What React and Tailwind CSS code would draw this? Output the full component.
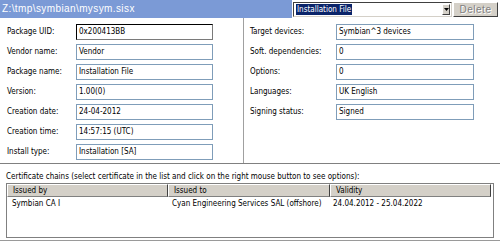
export default function App() {
  const leftRows = [
    ["Package UID:", "0x200413BB", true],
    ["Vendor name:", "Vendor"],
    ["Package name:", "Installation File"],
    ["Version:", "1.00(0)"],
    ["Creation date:", "24-04-2012"],
    ["Creation time:", "14:57:15 (UTC)"],
    ["Install type:", "Installation [SA]"],
  ];
  const rightRows = [
    ["Target devices:", "Symbian^3 devices"],
    ["Soft. dependencies:", "0"],
    ["Options:", "0"],
    ["Languages:", "UK English"],
    ["Signing status:", "Signed"],
  ];
  return (
    <div className="w-[500px] h-[248px] bg-white overflow-hidden text-[8px] leading-none text-black font-['DejaVu_Sans_Condensed','DejaVu_Sans',sans-serif]">
      {/* top bar */}
      <div className="flex h-[18px]">
        <div className="w-[292px] bg-[#7b9ad6] text-white text-[10px] tracking-[0.4px] pl-[2px] flex items-center font-['Liberation_Sans',sans-serif]">
          Z:\tmp\symbian\mysym.sisx
        </div>
        <div className="pt-[2px] pl-[1px]">
          <div className="w-[159px] h-[15px] border-t border-l border-[#404040] border-r border-b border-r-[#d4d0c8] border-b-[#d4d0c8] bg-white flex items-center pl-[2px] pr-[1px]">
            <span className="bg-[#0a246a] text-white px-[1px] h-[11px] flex items-center text-[8px]">Installation File</span>
            <div className="flex-1" />
            <div className="w-[8px] h-[11px] bg-[#d4d0c8] border-t border-l border-white border-r border-b border-r-[#404040] border-b-[#404040] flex items-center justify-center">
              <svg width="5" height="3" viewBox="0 0 5 3"><path d="M0 0H5L2.5 3Z" fill="#000" /></svg>
            </div>
          </div>
        </div>
        <div className="pt-[2px] pl-[1px]">
          <div className="w-[45px] h-[15px] bg-[#d4d0c8] border-t border-l border-white border-r border-b border-r-[#404040] border-b-[#404040] flex items-center justify-center text-[10px] tracking-[0.5px] text-[#808080] font-['Liberation_Sans',sans-serif] [text-shadow:1px_1px_0_#fff]">
            Delete
          </div>
        </div>
      </div>

      {/* fields */}
      <div className="flex h-[146px] border-b border-[#808080]">
        <div className="w-[243px] pl-[7px] pt-[6px] flex flex-col gap-[4px]">
          {leftRows.map(([l, v, focus]) => (
            <div key={l} className="flex items-center h-[16px]">
              <div className="w-[69px]">{l}</div>
              <div
                className={
                  "w-[137px] h-[16px] flex items-center pl-[2px] " +
                  (focus
                    ? "border-t border-l border-black border-r border-b border-r-[#7a7a7a] border-b-[#7a7a7a]"
                    : "border border-[#7f9db9]")
                }
              >
                {v}
              </div>
            </div>
          ))}
        </div>
        <div className="border-l border-[#a0a0a0]" />
        <div className="flex-1 pl-[6px] pt-[6px] flex flex-col gap-[4px]">
          {rightRows.map(([l, v]) => (
            <div key={l} className="flex items-center h-[16px]">
              <div className="w-[86px]">{l}</div>
              <div className="w-[138px] h-[16px] flex items-center pl-[2px] border border-[#7f9db9]">{v}</div>
            </div>
          ))}
        </div>
      </div>

      {/* certificates */}
      <div className="h-[77px] border-b border-[#9a9a9a] pl-[6px]">
        <div className="h-[19px] flex items-center pt-[7px]">
          Certificate chains (select certificate in the list and click on the right mouse button to see options):
        </div>
        <div className="w-[488px] h-[55px] border border-[#808080] bg-white">
          <div className="flex h-[13px]">
            {[
              ["Issued by", "w-[161px]"],
              ["Issued to", "w-[162px]"],
              ["Validity", "w-[161px]"],
            ].map(([t, w]) => (
              <div
                key={t}
                className={w + " bg-[#d4d0c8] border-t border-l border-white border-r border-b border-r-[#404040] border-b-[#808080] flex items-center pl-[5px]"}
              >
                {t}
              </div>
            ))}
          </div>
          <div className="flex h-[13px] items-center">
            <div className="w-[161px] pl-[5px]">Symbian CA I</div>
            <div className="w-[162px] pl-[4px]">Cyan Engineering Services SAL (offshore)</div>
            <div className="w-[161px] pl-[3px]">24.04.2012 - 25.04.2022</div>
          </div>
        </div>
      </div>
    </div>
  );
}
